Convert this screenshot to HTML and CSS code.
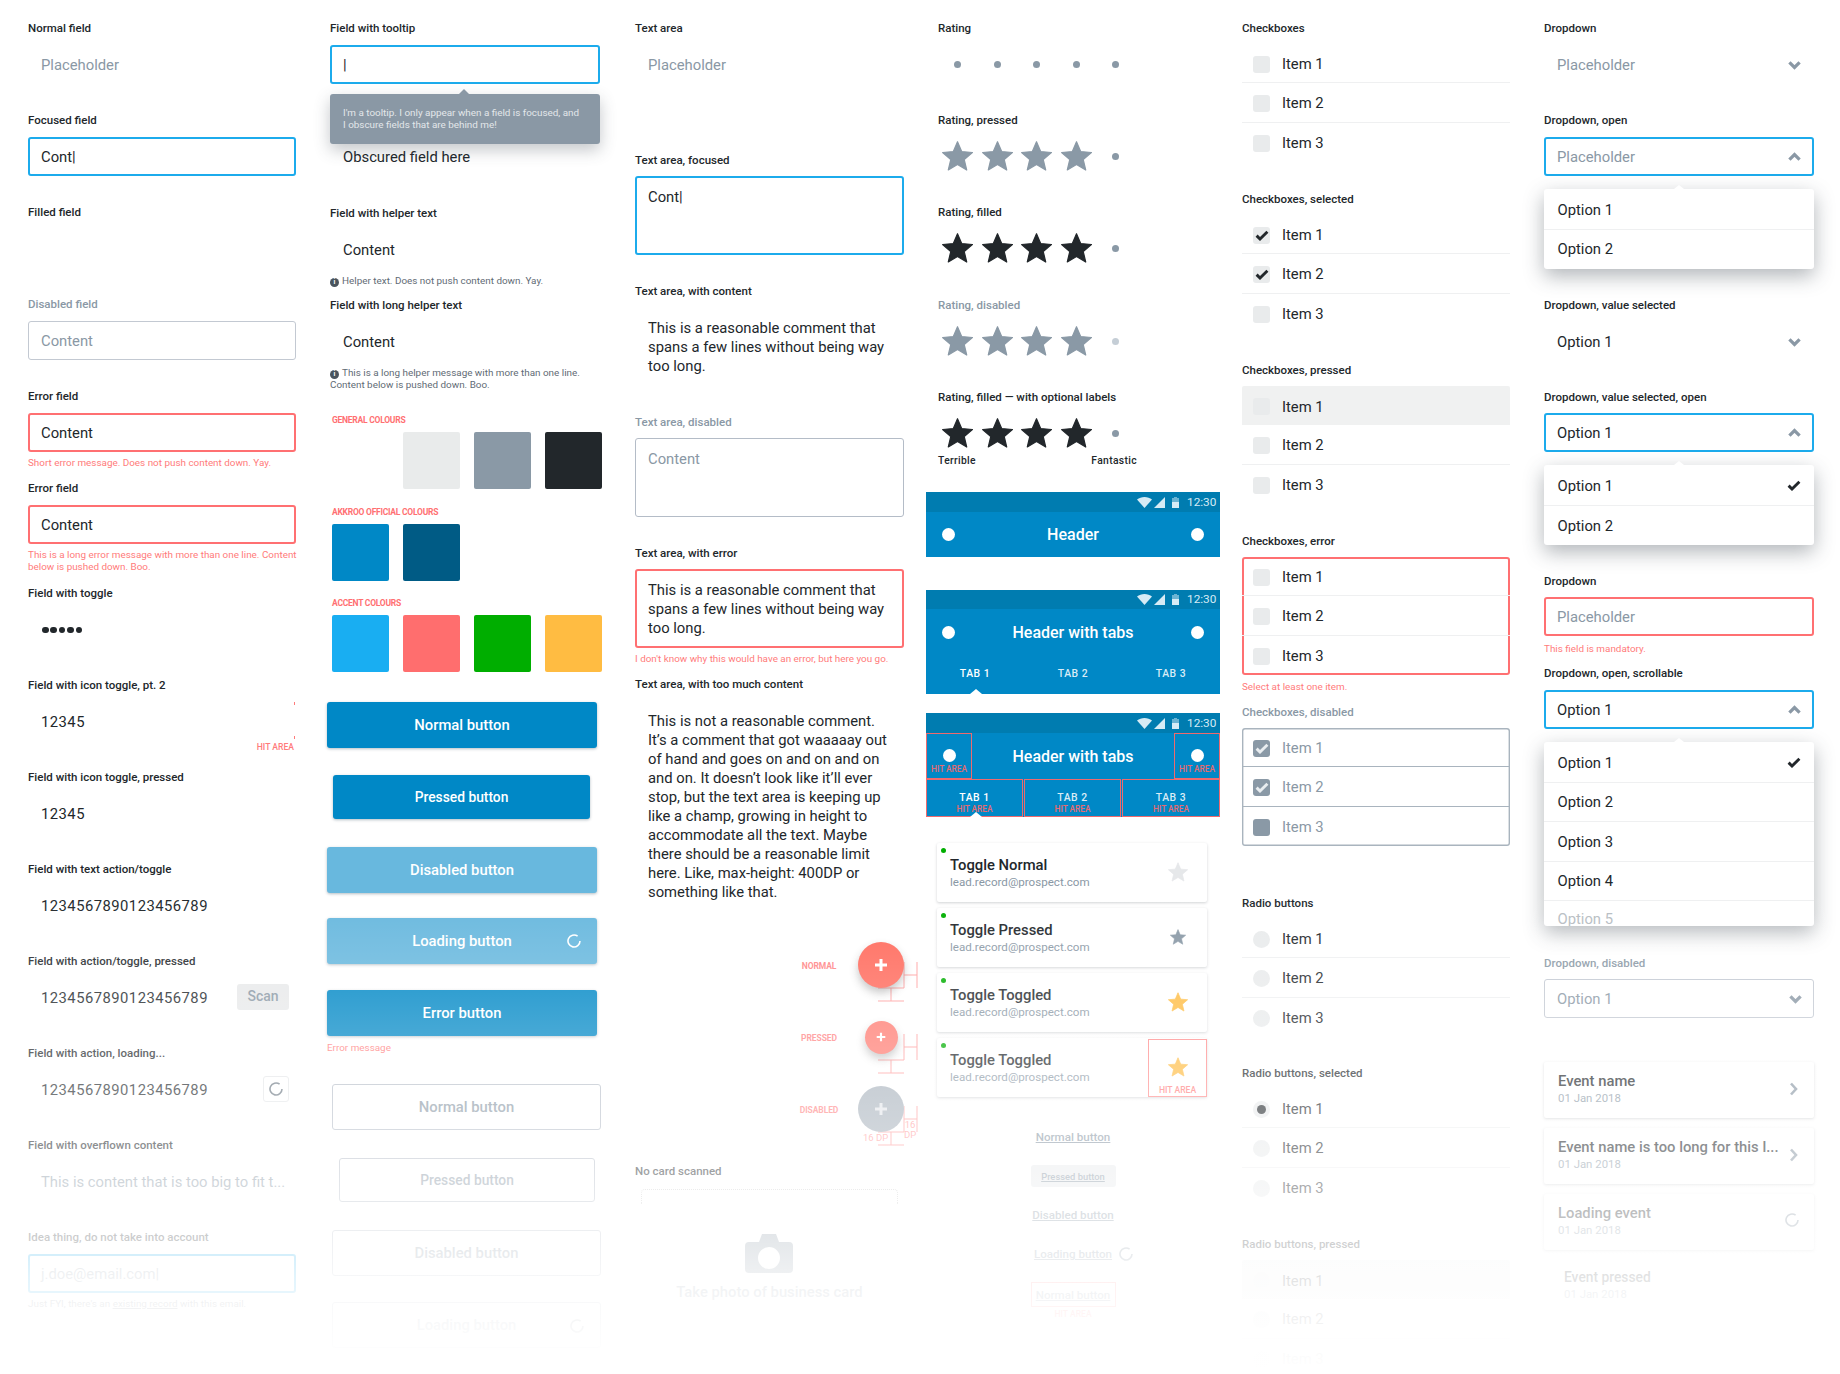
FILE: index.html
```html
<!DOCTYPE html>
<html lang="en">
<head>
<meta charset="utf-8">
<title>Component sheet</title>
<link rel="stylesheet" href="styles.css">
</head>
<body>
<svg class="defs" width="0" height="0" aria-hidden="true">
  <symbol id="star" viewBox="1.6 1.6 20.8 20"><path d="M12 17.27 18.18 21l-1.64-7.03L22 9.24l-7.19-.61L12 2 9.19 8.63 2 9.24l5.46 4.73L5.82 21z" fill="currentColor" stroke="currentColor" stroke-width=".8" stroke-linejoin="round"/></symbol>
  <symbol id="check" viewBox="0 0 14 11"><path d="M1.6 5.6 5 9 12.4 1.8" fill="none" stroke="currentColor" stroke-width="2.9"/></symbol>
  <symbol id="chev-down" viewBox="0 0 12 9"><path d="M1.3 2 6 6.7 10.7 2" fill="none" stroke="currentColor" stroke-width="3"/></symbol>
  <symbol id="chev-up" viewBox="0 0 12 9"><path d="M1.3 7 6 2.3 10.7 7" fill="none" stroke="currentColor" stroke-width="3"/></symbol>
  <symbol id="chev-right" viewBox="0 0 9 14"><path d="M2 1.5 7 7 2 12.5" fill="none" stroke="currentColor" stroke-width="2.6"/></symbol>
  <symbol id="spin" viewBox="0 0 14 14"><path d="M10.6 2.2A6 6 0 1 0 13 7" fill="none" stroke="currentColor" stroke-width="1.6"/></symbol>
  <symbol id="wifi" viewBox="0 0 15 11"><path d="M0 2.6C4-.8 11-.8 15 2.6L7.5 11z" fill="currentColor"/></symbol>
  <symbol id="signal" viewBox="0 0 11 11"><path d="M11 0v11H0z" fill="currentColor"/></symbol>
  <symbol id="battery" viewBox="0 0 7 11"><path d="M2 0h3v1h2v4H0V1h2z" fill="currentColor" opacity=".5"/><path d="M0 5h7v6H0z" fill="currentColor"/></symbol>
  <symbol id="plus" viewBox="0 0 14 14"><path d="M7 1v12M1 7h12" fill="none" stroke="currentColor" stroke-width="3"/></symbol>
  <symbol id="dims" viewBox="0 0 40 72"><path d="M39 31v26M26 44h13M26 31v26M0 57h26M13 57v13M0 70h26" fill="none" stroke="currentColor" stroke-width="1"/></symbol>
  <symbol id="camera" viewBox="0 0 48 39"><path fill-rule="evenodd" d="M4 8h10l3-8h14l3 8h10a4 4 0 0 1 4 4v23a4 4 0 0 1-4 4H4a4 4 0 0 1-4-4V12a4 4 0 0 1 4-4zm20 5a11 11 0 1 0 0 22 11 11 0 0 0 0-22z" fill="currentColor"/></symbol>
</svg>

<main class="board">

  <!-- column 1 -->
  <section class="col col-1">
    <div class="field"><div class="label">Normal field</div><div class="input ph">Placeholder</div></div>
    <div class="field"><div class="label">Focused field</div><div class="input focus">Cont|</div></div>
    <div class="field"><div class="label">Filled field</div><div class="input"></div></div>
    <div class="field"><div class="label muted">Disabled field</div><div class="input disabled ph">Content</div></div>
    <div class="field"><div class="label">Error field</div><div class="input error">Content</div><p class="msg err">Short error message. Does not push content down. Yay.</p></div>
    <div class="field field-tall"><div class="label">Error field</div><div class="input error">Content</div><p class="msg err nowrap">This is a long error message with more than one line. Content<br>below is pushed down. Boo.</p></div>
    <div class="field"><div class="label">Field with toggle</div><div class="input"><span class="pw"><i></i><i></i><i></i><i></i><i></i></span></div></div>
    <div class="field"><div class="label">Field with icon toggle, pt. 2</div><div class="input num hit-input">12345<span class="hit-label">HIT AREA</span></div></div>
    <div class="field"><div class="label">Field with icon toggle, pressed</div><div class="input num">12345</div></div>
    <div class="field"><div class="label">Field with text action/toggle</div><div class="input num">1234567890123456789</div></div>
    <div class="field"><div class="label">Field with action/toggle, pressed</div><div class="input num action-input">1234567890123456789<span class="scan">Scan</span></div></div>
    <div class="field"><div class="label">Field with action, loading...</div><div class="input num action-input">1234567890123456789<span class="loading-action"><svg class="spin-13"><use href="#spin"/></svg></span></div></div>
    <div class="field"><div class="label">Field with overflown content</div><div class="input ph">This is content that is too big to fit t...</div></div>
    <div class="field"><div class="label">Idea thing, do not take into account</div><div class="input focus ph">j.doe@email.com|</div><p class="msg">Just FYI, there's an <u>existing record</u> with this email.</p></div>
  </section>

  <!-- column 2 -->
  <section class="col col-2">
    <div class="field tip-anchor"><div class="label">Field with tooltip</div><div class="input focus">|</div>
      <div class="tooltip">I'm a tooltip. I only appear when a field is focused, and<br>I obscure fields that are behind me!</div>
    </div>
    <div class="field field-93"><div class="label"></div><div class="input">Obscured field here</div></div>
    <div class="field"><div class="label">Field with helper text</div><div class="input">Content</div><p class="msg helper"><span class="info">i</span>Helper text. Does not push content down. Yay.</p></div>
    <div class="field field-117"><div class="label">Field with long helper text</div><div class="input">Content</div><p class="msg helper"><span class="info">i</span>This is a long helper message with more than one line. Content below is pushed down. Boo.</p></div>

    <div class="swatch-title">General colours</div>
    <div class="swatches"><span></span><span class="c-light"></span><span class="c-grey"></span><span class="c-ink"></span></div>
    <div class="swatch-title st-2">Akkroo official colours</div>
    <div class="swatches"><span class="c-blue"></span><span class="c-navy"></span></div>
    <div class="swatch-title st-3">Accent colours</div>
    <div class="swatches"><span class="c-sky"></span><span class="c-red"></span><span class="c-green"></span><span class="c-amber"></span></div>

    <button class="btn btn-first solid">Normal button</button>
    <button class="btn small solid">Pressed button</button>
    <button class="btn solid is-disabled gap-28">Disabled button</button>
    <button class="btn solid is-loading gap-25">Loading button<svg class="btn-spin"><use href="#spin"/></svg></button>
    <button class="btn solid is-error gap-26">Error button</button>
    <p class="msg err btn-msg">Error message</p>
    <button class="btn outline gap-30">Normal button</button>
    <button class="btn outline small-outline">Pressed button</button>
    <button class="btn outline gap-28 faint">Disabled button</button>
    <button class="btn outline gap-26 faint">Loading button<svg class="btn-spin grey"><use href="#spin"/></svg></button>
  </section>

  <!-- column 3 -->
  <section class="col col-3">
    <div class="field area-field first"><div class="label">Text area</div><div class="area ph">Placeholder</div></div>
    <div class="field area-field"><div class="label">Text area, focused</div><div class="area focus">Cont|</div></div>
    <div class="field area-field"><div class="label">Text area, with content</div><div class="area">This is a reasonable comment that spans a few lines without being way too long.</div></div>
    <div class="field area-field"><div class="label muted">Text area, disabled</div><div class="area disabled ph">Content</div></div>
    <div class="field area-field"><div class="label">Text area, with error</div><div class="area error">This is a reasonable comment that spans a few lines without being way too long.</div><p class="msg err">I don't know why this would have an error, but here you go.</p></div>
    <div class="field area-long"><div class="label">Text area, with too much content</div><div class="area">This is not a reasonable comment.<br>It’s a comment that got waaaaay out<br>of hand and goes on and on and on<br>and on. It doesn’t look like it’ll ever<br>stop, but the text area is keeping up<br>like a champ, growing in height to<br>accommodate all the text. Maybe<br>there should be a reasonable limit<br>here. Like, max-height: 400DP or<br>something like that.</div></div>

    <div class="fab-row"><span class="fab-label">NORMAL</span><span class="fab-cell"><span class="fab"><svg class="plus"><use href="#plus"/></svg></span></span><svg class="dims"><use href="#dims"/></svg></div>
    <div class="fab-row"><span class="fab-label">PRESSED</span><span class="fab-cell"><span class="fab pressed"><svg class="plus tiny"><use href="#plus"/></svg></span></span><svg class="dims"><use href="#dims"/></svg></div>
    <div class="fab-row"><span class="fab-label">DISABLED</span><span class="fab-cell"><span class="fab off"><svg class="plus"><use href="#plus"/></svg></span></span><svg class="dims"><use href="#dims"/></svg><span class="dp dp-b">16 DP</span><span class="dp dp-r">16<br>DP</span></div>

    <div class="label card-label">No card scanned</div>
    <div class="dotted"></div>
    <svg class="camera"><use href="#camera"/></svg>
    <div class="photo-text">Take photo of business card</div>
  </section>

  <!-- column 4 -->
  <section class="col col-4">
    <div class="field rate"><div class="label">Rating</div>
      <div class="stars"><span><i class="dot"></i></span><span><i class="dot"></i></span><span><i class="dot"></i></span><span><i class="dot"></i></span><span><i class="dot"></i></span></div></div>
    <div class="field rate"><div class="label">Rating, pressed</div>
      <div class="stars grey"><span><svg class="star"><use href="#star"/></svg></span><span><svg class="star"><use href="#star"/></svg></span><span><svg class="star"><use href="#star"/></svg></span><span><svg class="star"><use href="#star"/></svg></span><span><i class="dot"></i></span></div></div>
    <div class="field rate field-93"><div class="label">Rating, filled</div>
      <div class="stars"><span><svg class="star"><use href="#star"/></svg></span><span><svg class="star"><use href="#star"/></svg></span><span><svg class="star"><use href="#star"/></svg></span><span><svg class="star"><use href="#star"/></svg></span><span><i class="dot"></i></span></div></div>
    <div class="field rate"><div class="label muted">Rating, disabled</div>
      <div class="stars grey"><span><svg class="star"><use href="#star"/></svg></span><span><svg class="star"><use href="#star"/></svg></span><span><svg class="star"><use href="#star"/></svg></span><span><svg class="star"><use href="#star"/></svg></span><span><i class="dot pale"></i></span></div></div>
    <div class="field rate rate-last"><div class="label">Rating, filled — with optional labels</div>
      <div class="stars"><span><svg class="star"><use href="#star"/></svg></span><span><svg class="star"><use href="#star"/></svg></span><span><svg class="star"><use href="#star"/></svg></span><span><svg class="star"><use href="#star"/></svg></span><span><i class="dot"></i></span></div>
      <div class="scale"><span>Terrible</span><span>Fantastic</span></div></div>

    <header class="app">
      <div class="status"><svg class="i-wifi"><use href="#wifi"/></svg><svg class="i-signal"><use href="#signal"/></svg><svg class="i-batt"><use href="#battery"/></svg><span>12:30</span></div>
      <div class="bar"><i class="round"></i><b>Header</b><i class="round"></i></div>
    </header>
    <header class="app with-tabs">
      <div class="status"><svg class="i-wifi"><use href="#wifi"/></svg><svg class="i-signal"><use href="#signal"/></svg><svg class="i-batt"><use href="#battery"/></svg><span>12:30</span></div>
      <div class="bar"><i class="round"></i><b>Header with tabs</b><i class="round"></i></div>
      <div class="tabs"><span class="on">TAB 1</span><span>TAB 2</span><span>TAB 3</span></div>
    </header>
    <header class="app with-tabs annotated">
      <div class="status"><svg class="i-wifi"><use href="#wifi"/></svg><svg class="i-signal"><use href="#signal"/></svg><svg class="i-batt"><use href="#battery"/></svg><span>12:30</span></div>
      <div class="bar"><em class="hit-cell"><i class="round"></i><small>HIT AREA</small></em><b>Header with tabs</b><em class="hit-cell"><i class="round"></i><small>HIT AREA</small></em></div>
      <div class="tabs"><span class="on">TAB 1<small>HIT AREA</small></span><span>TAB 2<small>HIT AREA</small></span><span>TAB 3<small>HIT AREA</small></span></div>
    </header>

    <div class="toggle first-toggle"><i class="live"></i><b>Toggle Normal</b><span>lead.record@prospect.com</span><svg class="t-star light"><use href="#star"/></svg></div>
    <div class="toggle"><i class="live"></i><b>Toggle Pressed</b><span>lead.record@prospect.com</span><svg class="t-star mini"><use href="#star"/></svg></div>
    <div class="toggle"><i class="live"></i><b>Toggle Toggled</b><span>lead.record@prospect.com</span><svg class="t-star gold"><use href="#star"/></svg></div>
    <div class="toggle"><i class="live"></i><b>Toggle Toggled</b><span>lead.record@prospect.com</span><svg class="t-star gold"><use href="#star"/></svg><small class="t-hit">HIT AREA</small></div>

    <div class="links">
      <a class="link">Normal button</a>
      <a class="link pressed">Pressed button</a>
      <a class="link">Disabled button</a>
      <a class="link">Loading button<svg class="link-spin"><use href="#spin"/></svg></a>
      <a class="link boxed">Normal button</a>
      <small class="link-hit">HIT AREA</small>
    </div>
  </section>

  <!-- column 5 -->
  <section class="col col-5">
    <div class="group"><div class="label">Checkboxes</div><div class="list">
      <div class="row"><i class="cb"></i>Item 1</div><div class="row"><i class="cb"></i>Item 2</div><div class="row"><i class="cb"></i>Item 3</div></div></div>
    <div class="group"><div class="label">Checkboxes, selected</div><div class="list">
      <div class="row"><i class="cb"><svg class="tick"><use href="#check"/></svg></i>Item 1</div><div class="row"><i class="cb"><svg class="tick"><use href="#check"/></svg></i>Item 2</div><div class="row"><i class="cb"></i>Item 3</div></div></div>
    <div class="group"><div class="label">Checkboxes, pressed</div><div class="list">
      <div class="row press"><i class="cb"></i>Item 1</div><div class="row"><i class="cb"></i>Item 2</div><div class="row"><i class="cb"></i>Item 3</div></div></div>
    <div class="group"><div class="label">Checkboxes, error</div><div class="list ring-red">
      <div class="row"><i class="cb"></i>Item 1</div><div class="row"><i class="cb"></i>Item 2</div><div class="row"><i class="cb"></i>Item 3</div></div><p class="msg err msg-tight">Select at least one item.</p></div>
    <div class="group group-191"><div class="label muted">Checkboxes, disabled</div><div class="list ring-grey">
      <div class="row off"><i class="cb dark"><svg class="tick"><use href="#check"/></svg></i>Item 1</div><div class="row off"><i class="cb dark"><svg class="tick"><use href="#check"/></svg></i>Item 2</div><div class="row off"><i class="cb dark"></i>Item 3</div></div></div>
    <div class="group group-170"><div class="label">Radio buttons</div><div class="list">
      <div class="row"><i class="cb radio"></i>Item 1</div><div class="row"><i class="cb radio"></i>Item 2</div><div class="row"><i class="cb radio"></i>Item 3</div></div></div>
    <div class="group"><div class="label">Radio buttons, selected</div><div class="list">
      <div class="row"><i class="cb radio picked"></i>Item 1</div><div class="row"><i class="cb radio"></i>Item 2</div><div class="row"><i class="cb radio"></i>Item 3</div></div></div>
    <div class="group"><div class="label">Radio buttons, pressed</div><div class="list">
      <div class="row press"><i class="cb radio"></i>Item 1</div><div class="row"><i class="cb radio"></i>Item 2</div><div class="row"><i class="cb radio"></i>Item 3</div></div></div>
  </section>

  <!-- column 6 -->
  <section class="col col-6">
    <div class="field"><div class="label">Dropdown</div><div class="input ph select">Placeholder<svg class="chev"><use href="#chev-down"/></svg></div></div>
    <div class="dd"><div class="label">Dropdown, open</div><div class="input ph select focus">Placeholder<svg class="chev"><use href="#chev-up"/></svg></div>
      <div class="menu"><div class="opt">Option 1</div><div class="opt">Option 2</div></div></div>
    <div class="field"><div class="label">Dropdown, value selected</div><div class="input select">Option 1<svg class="chev"><use href="#chev-down"/></svg></div></div>
    <div class="dd"><div class="label">Dropdown, value selected, open</div><div class="input select focus tight">Option 1<svg class="chev"><use href="#chev-up"/></svg></div>
      <div class="menu"><div class="opt">Option 1<svg class="tick"><use href="#check"/></svg></div><div class="opt">Option 2</div></div></div>
    <div class="field"><div class="label">Dropdown</div><div class="input ph select error tight">Placeholder</div><p class="msg err msg-tall">This field is mandatory.</p></div>
    <div class="dd"><div class="label">Dropdown, open, scrollable</div><div class="input select focus">Option 1<svg class="chev"><use href="#chev-up"/></svg></div>
      <div class="menu scrolling"><div class="opt">Option 1<svg class="tick"><use href="#check"/></svg></div><div class="opt">Option 2</div><div class="opt">Option 3</div><div class="opt">Option 4</div><div class="opt">Option 5</div></div></div>
    <div class="dd-off"><div class="label muted">Dropdown, disabled</div><div class="input select disabled ph tight">Option 1<svg class="chev"><use href="#chev-down"/></svg></div></div>

    <div class="event"><b>Event name</b><span>01 Jan 2018</span><svg class="ev-chev"><use href="#chev-right"/></svg></div>
    <div class="event"><b>Event name is too long for this l...</b><span>01 Jan 2018</span><svg class="ev-chev"><use href="#chev-right"/></svg></div>
    <div class="event"><b>Loading event</b><span>01 Jan 2018</span><svg class="ev-spin"><use href="#spin"/></svg></div>
    <div class="event pressed"><b>Event pressed</b><span>01 Jan 2018</span></div>
  </section>

  <div class="fade"></div>
</main>
</body>
</html>
```

FILE: styles.css
```css
* { box-sizing: border-box; }
html, body { margin: 0; padding: 0; background: #fff; }
body { font-family: Roboto, "Liberation Sans", sans-serif; color: #22272b; }
.defs { position: absolute; }
i, em { font-style: normal; }
svg { display: block; }

.board {
  position: relative;
  display: grid;
  grid-template-columns: 302px 305px 291px 316px 302px 270px;
  width: 1840px;
  height: 1374px;
  padding: 20px 0 0 28px;
  overflow: hidden;
}
.col { position: relative; }
.col-1 { width: 268px; }
.col-2 { width: 270px; }
.col-3 { width: 269px; }
.col-4 { width: 294px; }
.col-5 { width: 268px; }
.col-6 { width: 270px; }

/* labels & messages */
.label { height: 16px; font-size: 11.5px; line-height: 16px; font-weight: 500; white-space: nowrap; }
.muted { color: #8a98a5; }
.msg { margin: 5px 0 0; font-size: 9.9px; line-height: 11.6px; color: #5f6b75; }
.err { color: #ff7b7b; }
.nowrap { white-space: nowrap; }
.msg-tight { margin-top: 6px; }
.msg-tall { margin-top: 7px; }
.helper { color: #5f6b75; margin-top: 6px; }
.info { display: inline-block; width: 9px; height: 9px; margin-right: 3px; border-radius: 50%; background: #4a545d; color: #fff; font-size: 7px; line-height: 9px; text-align: center; font-weight: 700; vertical-align: 0; }

/* fields */
.field { position: relative; height: 92px; }
.field-tall { height: 105px; }
.field-93 { height: 93px; }
.field-117 { height: 117px; }
.input {
  position: relative;
  display: flex; align-items: center;
  height: 39px; margin-top: 9px; padding: 1px 11px 0;
  border: 2px solid transparent; border-radius: 3px;
  font-size: 14.8px; white-space: nowrap; color: #22272b;
}
.tight { margin-top: 8px; }
.ph { color: #8a98a5; }
.focus { border-color: #1cabec; }
.error { border-color: #ff7072; }
.disabled { border: 1px solid #c3c9d2; padding-left: 12px; }
.num { letter-spacing: .47px; }
.pw { display: flex; gap: 1.95px; margin-left: 1px; }
.pw i { width: 6.5px; height: 6.5px; border-radius: 50%; background: #22272b; }
.hit-input::before, .hit-input::after { content: ""; position: absolute; right: -1px; width: 1px; height: 3px; background: #ff7b7b; }
.hit-input::before { top: -2px; }
.hit-input::after { bottom: 0; }
.hit-label { position: absolute; right: 0; top: 38px; font-size: 8.6px; font-weight: 500; color: #ff7b7b; letter-spacing: 0; }
.action-input { justify-content: space-between; padding-right: 5px; }
.scan { width: 52px; height: 26px; border-radius: 3px; background: #e8e9ea; color: #8a98a5; font-weight: 500; font-size: 14px; text-align: center; line-height: 24px; letter-spacing: 0; margin-top: -2px; }
.loading-action { display: flex; align-items: center; justify-content: center; width: 26px; height: 26px; border: 1px solid #e5e7e9; border-radius: 3px; color: #6e7a85; margin-top: -2px; }
.spin-13 { width: 14px; height: 14px; }

/* tooltip */
.tooltip {
  position: absolute; left: 0; top: 74px; z-index: 2;
  width: 270px; height: 50px; padding: 13px 12px 0 13px;
  border-radius: 3px; background: #8a98a5; color: #e3e7ea;
  font-size: 9.9px; line-height: 11.6px;
  box-shadow: 0 6px 16px rgba(60, 70, 80, .3);
}
.tooltip::before { content: ""; position: absolute; left: 129px; top: -5px; border: 5px solid transparent; border-top: 0; border-bottom-color: #8a98a5; }

/* swatches */
.swatch-title { margin-left: 2px; height: 12px; font-size: 8.5px; line-height: 12px; font-weight: 700; letter-spacing: -.25px; text-transform: uppercase; color: #ff7072; }
.st-2 { margin-top: 17px; }
.st-3 { margin-top: 16px; }
.swatches { display: grid; grid-template-columns: repeat(4, 57px); column-gap: 14px; height: 57px; margin: 6px 0 0 2px; width: 272px; }
.swatches span { border-radius: 2px; }
.c-light { background: #e9ebeb; }
.c-grey { background: #8a99a6; }
.c-ink { background: #22272b; }
.c-blue { background: #0088c6; }
.c-navy { background: #005b85; }
.c-sky { background: #19aef2; }
.c-red { background: #ff6e6e; }
.c-green { background: #00ae00; }
.c-amber { background: #ffbc42; }

/* buttons */
.btn {
  position: relative; display: flex; align-items: center; justify-content: center;
  width: 270px; height: 46px; border: 0; border-radius: 3px; padding: 0;
  font-family: inherit; font-size: 14.8px; font-weight: 500;
}
.solid { background: #0088c6; color: #fff; margin-left: -3px; box-shadow: 0 1px 3px rgba(0, 40, 60, .3); }
.btn-first { margin-top: 30px; }
.small { width: 257px; height: 44px; margin: 27px 0 0 3px; font-size: 13.8px; }
.gap-25 { margin-top: 25px; }
.gap-26 { margin-top: 26px; }
.gap-28 { margin-top: 28px; }
.gap-30 { margin-top: 30px; }
.is-disabled { background: #68b8de; }
.is-loading { background: #68b8de; }
.is-error { background: #0088c6; }
.btn-spin { position: absolute; right: 16px; top: 16px; width: 14px; height: 14px; color: #fff; }
.btn-spin.grey { color: #6e7a85; }
.btn-msg { margin: 6px 0 0 -3px; }
.outline { margin-left: 2px; width: 269px; background: #fff; border: 1px solid #b8bfca; color: #8a98a5; }
.small-outline { width: 256px; height: 44px; margin: 28px 0 0 9px; font-size: 13.8px; }

/* text areas */
.area-field { height: 131px; }
.area-field.first { height: 132px; }
.area-long { height: 255px; }
.area {
  height: 79px; margin-top: 8px; padding: 10px 11px 0;
  border: 2px solid transparent; border-radius: 3px;
  font-size: 14.8px; line-height: 19px; color: #22272b;
}
.area.ph { color: #8a98a5; }
.area.focus { border-color: #1cabec; }
.area.error { border-color: #ff7072; }
.area.disabled { border: 1px solid #b4bcc7; padding: 11px 12px 0; }
.area-long .area { height: auto; white-space: nowrap; }

/* fabs */
.fab-row { position: relative; display: flex; align-items: center; height: 68px; margin-bottom: 4px; }
.fab-label { width: 72px; margin-left: 148px; padding-top: 2px; text-align: center; font-size: 8.5px; font-weight: 700; letter-spacing: -.1px; color: #ff8484; }
.fab-cell { position: relative; z-index: 1; display: flex; justify-content: center; width: 46px; margin-left: 3px; }
.fab { display: flex; align-items: center; justify-content: center; width: 46px; height: 46px; border-radius: 50%; background: #ff6a5c; color: #fff; box-shadow: 0 5px 8px rgba(40, 40, 40, .3); }
.fab.pressed { width: 33px; height: 33px; background: #ff7a70; }
.fab.off { background: #a9b3bd; box-shadow: none; color: #e3e6ea; }
.plus { width: 14px; height: 14px; }
.plus.tiny { width: 10px; height: 10px; }
.dims { position: absolute; left: 243px; top: 0; width: 40px; height: 72px; color: #ff9d9d; }
.dp { position: absolute; font-size: 9.5px; line-height: 10px; color: #ff9d9d; text-align: center; }
.dp-b { left: 228px; top: 58px; z-index: 2; }
.dp-r { left: 269px; top: 45px; }
.card-label { margin-top: 20px; color: #22272b; }
.dotted { width: 257px; height: 15px; margin: 10px 0 0 6px; border: 1px dotted #ccc; border-bottom: 0; border-radius: 4px 4px 0 0; }
.camera { width: 48px; height: 39px; margin: 30px 0 0 110px; color: #8a98a5; }
.photo-text { margin-top: 9px; height: 20px; line-height: 20px; text-align: center; font-size: 14.8px; font-weight: 500; color: #8a98a5; }

/* rating */
.rate .label { margin-left: 12px; }
.stars { display: flex; margin: 13px 0 0 12px; height: 30px; }
.stars span { display: flex; align-items: center; justify-content: center; width: 39.5px; }
.stars.grey { color: #8a99a6; }
.star { width: 31px; height: 30px; }
.dot { width: 7px; height: 7px; border-radius: 50%; background: #8a99a6; }
.dot.pale { background: #c5ced6; }
.rate-last { height: 103px; }
.scale { display: flex; justify-content: space-between; width: 199px; margin: 7px 0 0 12px; font-size: 10.3px; line-height: 12px; font-weight: 500; letter-spacing: .35px; }

/* app headers */
.app { position: relative; width: 294px; height: 65px; background: #0088c6; color: #fff; }
.status { display: flex; align-items: center; justify-content: flex-end; height: 20px; padding-right: 7px; background: #007cb0; color: #d6ebf5; font-size: 11.8px; }
.status span { margin-left: 8px; width: 26px; margin-top: -1px; }
.i-wifi { width: 15px; height: 11px; }
.i-signal { width: 11px; height: 11px; margin-left: 2px; }
.i-batt { width: 7px; height: 11px; margin-left: 7px; }
.bar { display: flex; align-items: center; justify-content: space-between; height: 45px; padding: 0 16px; }
.bar b { font-size: 16px; font-weight: 500; }
.round { display: block; width: 13px; height: 13px; border-radius: 50%; background: #fff; }
.with-tabs { height: 104px; margin-top: 33px; }
.with-tabs .status { height: 19px; }
.with-tabs .bar { height: 46px; }
.tabs { position: relative; display: grid; grid-template-columns: 98px 98px 98px; height: 39px; text-align: center; font-size: 10.4px; font-weight: 500; letter-spacing: .5px; }
.tabs span { padding-top: 12px; line-height: 13px; color: #d9ecf6; }
.tabs .on { color: #fff; }
.tabs::after { content: ""; position: absolute; left: 44px; bottom: 0; border: 6px solid transparent; border-top: 0; border-bottom: 5px solid #fff; }
.annotated { margin-top: 19px; }
.annotated .status { height: 20px; }
.annotated .bar { padding: 0; height: 46px; }
.hit-cell { display: flex; flex-direction: column; align-items: center; justify-content: flex-end; width: 46px; height: 46px; padding-bottom: 3px; border: 1px solid #ee6a6e; }
.hit-cell small, .tabs small { font-size: 8.3px; line-height: 11px; font-weight: 500; letter-spacing: 0; color: #e76a70; }
.hit-cell .round { margin-bottom: 2px; }
.annotated .tabs { height: 38px; column-gap: 1px; grid-template-columns: 97px 97px 98px; }
.annotated .tabs span { display: flex; flex-direction: column; padding-top: 11px; line-height: 13px; border: 1px solid #ee6a6e; }

/* toggles */
.toggle { position: relative; display: flex; flex-direction: column; width: 270px; height: 59px; margin: 0 0 6px 11px; padding: 13px 0 0 13px; border-radius: 2px; background: #fff; box-shadow: 0 1px 3px rgba(40, 50, 60, .22); }
.first-toggle { margin-top: 26px; }
.toggle b { font-size: 14.8px; line-height: 18px; font-weight: 500; }
.toggle span { font-size: 11.6px; line-height: 16px; color: #8a98a5; }
.live { position: absolute; left: 4px; top: 5px; width: 5px; height: 5px; border-radius: 50%; background: #00ae00; }
.t-star { position: absolute; left: 231px; top: 19px; width: 20px; height: 20px; color: #8a99a6; }
.t-star.light { color: #e6e8ea; }
.t-star.mini { left: 233px; top: 21px; width: 16px; height: 16px; }
.t-star.gold { color: #ffbc42; }
.t-hit { position: absolute; right: 0; top: 1px; width: 59px; height: 58px; padding-top: 44px; border: 1px solid #ff8a8a; text-align: center; font-size: 8.6px; font-weight: 500; line-height: 12px; color: #ff7b7b; }

/* text buttons */
.links { display: flex; flex-direction: column; align-items: center; gap: 17px; margin-top: 29px; }
.link { position: relative; display: flex; align-items: center; justify-content: center; width: 85px; height: 22px; font-size: 11.6px; font-weight: 500; color: #8a98a5; text-decoration: underline; white-space: nowrap; }
.link.pressed { background: #e9ebed; border-radius: 3px; font-size: 9.4px; }
.link-spin { position: absolute; left: 88px; top: 4px; width: 14px; height: 14px; color: #8a98a5; }
.link.boxed { height: 25px; border: 1px solid #ff8a8a; }
.link-hit { margin-top: -15px; font-size: 8.6px; font-weight: 500; color: #ff7b7b; }

/* checkbox groups */
.group { height: 171px; }
.group-191 { height: 191px; }
.group-170 { height: 170px; }
.list { margin-top: 8px; }
.row { display: flex; align-items: center; height: 39.33px; padding: 2px 0 0 11px; font-size: 14.8px; color: #22272b; border-bottom: 1px solid #eff0f1; }
.row:last-child { border-bottom: 0; }
.cb { display: flex; align-items: center; justify-content: center; width: 17px; height: 17px; margin-right: 12px; border-radius: 3px; background: #e9ebec; color: #22272b; }
.tick { width: 14px; height: 11px; }
.press { background: #f0f1f1; border-radius: 2px 2px 0 0; border-bottom: 0; }
.ring-red { border-radius: 3px; box-shadow: inset 0 0 0 2px #ff7072; }
.ring-grey { border-radius: 3px; box-shadow: inset 0 0 0 1.4px #a9b4be; }
.ring-grey .row { border-bottom-color: #a9b4be; color: #8a98a5; }
.cb.dark { background: #8a99a6; color: #e9edf0; }
.radio { border-radius: 50%; }
.picked { position: relative; background: #e9ebec; }
.picked::after { content: ""; width: 9px; height: 9px; border-radius: 50%; background: #22272b; }

/* dropdowns */
.select { justify-content: space-between; padding-right: 11px; }
.chev { width: 13px; height: 10px; color: #8a98a5; flex: none; }
.dd + .field { margin-top: 28px; }
.dd + .dd-off { margin-top: 29px; }
.menu { position: relative; margin-top: 13px; padding-top: 1.5px; border-radius: 3px; background: #fff; box-shadow: 0 7px 20px rgba(50, 60, 70, .38); }
.menu::before { content: ""; position: absolute; left: 130px; top: -4px; border: 5px solid transparent; border-top: 0; border-bottom: 4px solid #fff; }
.opt { display: flex; align-items: center; justify-content: space-between; height: 39.33px; padding: 0 13px 0 13.5px; font-size: 14.8px; color: #22272b; border-bottom: 1px solid #eff0f1; }
.opt:last-child { border-bottom: 0; }
.scrolling { height: 184px; }
.scrolling .opt:last-child { position: relative; height: 25px; overflow: hidden; align-items: flex-start; padding-top: 9px; color: #b6bcc2; }
.dd-off { height: 107px; }
.event { position: relative; display: flex; flex-direction: column; width: 270px; height: 56px; margin-bottom: 10px; padding: 10px 0 0 14px; border-radius: 2px; background: #fff; box-shadow: 0 1px 3px rgba(40, 50, 60, .22); }
.event b { font-size: 14.8px; line-height: 18px; font-weight: 500; }
.event span { font-size: 11.4px; line-height: 16px; color: #8a98a5; }
.ev-chev { position: absolute; right: 16px; top: 20px; width: 9px; height: 14px; color: #8a98a5; }
.ev-spin { position: absolute; right: 15px; top: 19px; width: 14px; height: 14px; color: #8a98a5; }
.event.pressed { padding: 8px 0 0 20px; box-shadow: none; }
.event.pressed b { font-size: 13.8px; }

/* fade over the lower part of the sheet */
.fade {
  position: absolute; left: 0; right: 0; top: 888px; bottom: 0; z-index: 5; pointer-events: none;
  background: linear-gradient(to bottom,
    rgba(255, 255, 255, 0),
    rgba(255, 255, 255, .235) 25.7%,
    rgba(255, 255, 255, .36) 39.7%,
    rgba(255, 255, 255, .48) 52.9%,
    rgba(255, 255, 255, .7) 66.7%,
    rgba(255, 255, 255, .87) 80%,
    rgba(255, 255, 255, .97) 93%,
    #fff);
}
```
